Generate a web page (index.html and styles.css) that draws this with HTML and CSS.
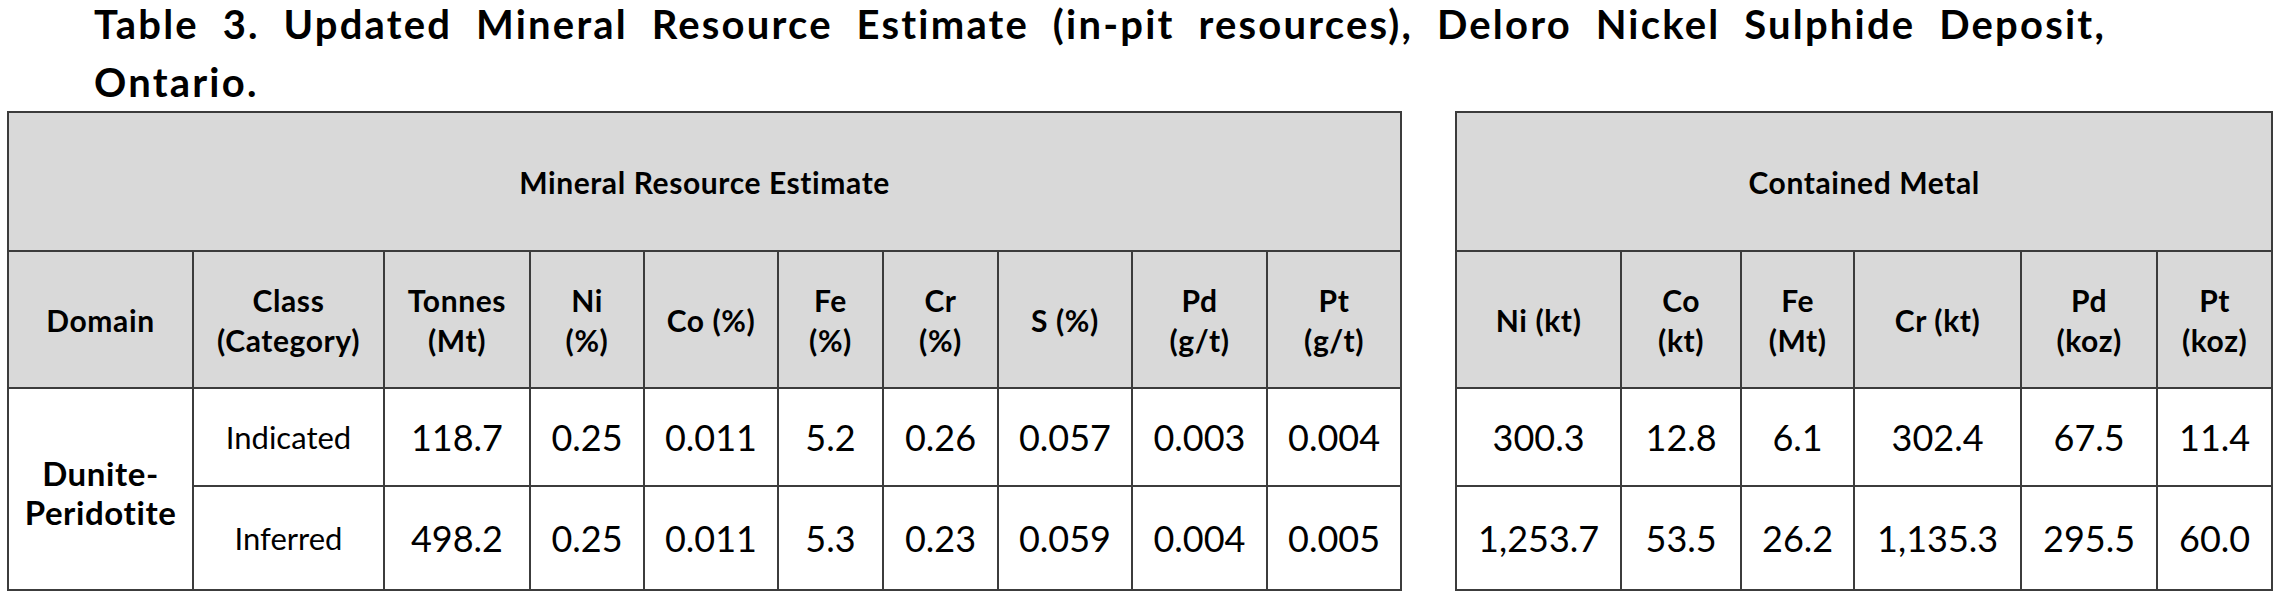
FILE: index.html
```html
<!DOCTYPE html>
<html lang="en">
<head>
<meta charset="utf-8">
<title>Table 3. Updated Mineral Resource Estimate</title>
<link rel="stylesheet" href="styles.css">
</head>
<body>
<div class="page">
  <h1 class="title">
    <span class="title-line title-first">Table 3. Updated Mineral Resource Estimate (in-pit resources), Deloro Nickel Sulphide Deposit,</span>
    <span class="title-line">Ontario.</span>
  </h1>
  <div class="tables">
    <table class="grid grid-left">
      <colgroup>
        <col class="w185"><col class="w191"><col class="w146"><col class="w114"><col class="w134">
        <col class="w105"><col class="w115"><col class="w134"><col class="w135"><col class="w134">
      </colgroup>
      <thead>
        <tr class="r-group"><th colspan="10" class="group">Mineral Resource Estimate</th></tr>
        <tr class="r-head">
          <th>Domain</th>
          <th>Class<br>(Category)</th>
          <th>Tonnes<br>(Mt)</th>
          <th>Ni<br>(%)</th>
          <th>Co (%)</th>
          <th>Fe<br>(%)</th>
          <th>Cr<br>(%)</th>
          <th>S (%)</th>
          <th>Pd<br>(g/t)</th>
          <th>Pt<br>(g/t)</th>
        </tr>
      </thead>
      <tbody>
        <tr class="r-one">
          <th rowspan="2" class="domain">Dunite-<br>Peridotite</th>
          <td class="label">Indicated</td>
          <td>118.7</td><td>0.25</td><td>0.011</td><td>5.2</td><td>0.26</td><td>0.057</td><td>0.003</td><td>0.004</td>
        </tr>
        <tr class="r-two">
          <td class="label">Inferred</td>
          <td>498.2</td><td>0.25</td><td>0.011</td><td>5.3</td><td>0.23</td><td>0.059</td><td>0.004</td><td>0.005</td>
        </tr>
      </tbody>
    </table>

    <table class="grid grid-right">
      <colgroup>
        <col class="w165"><col class="w120"><col class="w113"><col class="w167"><col class="w136"><col class="w115">
      </colgroup>
      <thead>
        <tr class="r-group"><th colspan="6" class="group">Contained Metal</th></tr>
        <tr class="r-head">
          <th>Ni (kt)</th>
          <th>Co<br>(kt)</th>
          <th>Fe<br>(Mt)</th>
          <th>Cr (kt)</th>
          <th>Pd<br>(koz)</th>
          <th>Pt<br>(koz)</th>
        </tr>
      </thead>
      <tbody>
        <tr class="r-one">
          <td>300.3</td><td>12.8</td><td>6.1</td><td>302.4</td><td>67.5</td><td>11.4</td>
        </tr>
        <tr class="r-two">
          <td>1,253.7</td><td>53.5</td><td>26.2</td><td>1,135.3</td><td>295.5</td><td>60.0</td>
        </tr>
      </tbody>
    </table>
  </div>
</div>
</body>
</html>
```

FILE: styles.css
```css
html, body {
  margin: 0;
  padding: 0;
  background: #ffffff;
}

body {
  font-family: Lato, "Open Sans", "Liberation Sans", sans-serif;
  color: #000000;
}

.page {
  width: 2276px;
  height: 594px;
  overflow: hidden;
}

.title {
  margin: 0;
  padding: 0 170px 0 94px;
  font-size: 40px;
  font-weight: 700;
  line-height: 48px;
  letter-spacing: 2.2px;
}

.title-line {
  display: block;
}

.title-first {
  text-align: justify;
  text-align-last: justify;
  margin-bottom: 9.5px;
}

.tables {
  display: flex;
  align-items: flex-start;
  gap: 53px;
  padding: 5.5px 0 0 7px;
}

.grid {
  border-collapse: collapse;
  table-layout: fixed;
  flex: none;
}

.grid-left { width: 1393px; }
.grid-right { width: 816px; }

.grid th,
.grid td {
  border: 2px solid #3c3c3c;
  padding: 0;
  text-align: center;
  vertical-align: middle;
}

.grid thead th {
  background: #d9d9d9;
  font-size: 30px;
  font-weight: 700;
  line-height: 40px;
  letter-spacing: 0.6px;
}

.grid td {
  font-size: 36px;
  font-weight: 400;
  line-height: 40px;
  background: #ffffff;
}

.grid td.label {
  font-size: 31px;
}

.grid th.domain {
  background: #ffffff;
  font-size: 33px;
  font-weight: 700;
  line-height: 39px;
  letter-spacing: 0.6px;
  padding-top: 8px;
}

.r-group { height: 139px; }
.r-head { height: 137px; }
.r-one { height: 98px; }
.r-two { height: 104px; }

.w105 { width: 105px; }
.w113 { width: 113px; }
.w114 { width: 114px; }
.w115 { width: 115px; }
.w120 { width: 120px; }
.w134 { width: 134px; }
.w135 { width: 135px; }
.w136 { width: 136px; }
.w146 { width: 146px; }
.w165 { width: 165px; }
.w167 { width: 167px; }
.w185 { width: 185px; }
.w191 { width: 191px; }
```
